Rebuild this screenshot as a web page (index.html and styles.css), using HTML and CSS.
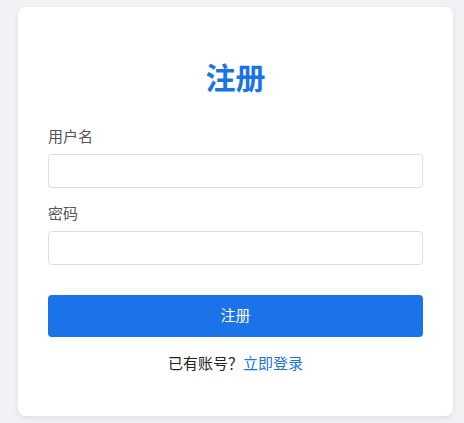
FILE: index.html
```html
<!DOCTYPE html>
<html lang="zh-CN">
<head>
    <meta charset="UTF-8">
    <meta name="viewport" content="width=device-width, initial-scale=1.0">
    <title>注册</title>
    <link rel="stylesheet" href="styles.css">
</head>
<body>
    <div class="register-box">
        <h1>注册</h1>
        <form action="/register" method="post">
            <div class="field">
                <label for="username">用户名</label>
                <input type="text" id="username" name="username">
            </div>
            <div class="field">
                <label for="password">密码</label>
                <input type="password" id="password" name="password">
            </div>
            <button type="submit">注册</button>
        </form>
        <p class="login-link">已有账号？<a href="/login">立即登录</a></p>
    </div>
</body>
</html>
```

FILE: styles.css
```css
body {
    font-family: "Noto Sans CJK SC", "Noto Sans", sans-serif;
    margin: 0;
    padding: 7px 11px 7px 18px;
    background-color: #f0f2f5;
}

.register-box {
    background-color: #fff;
    border-radius: 8px;
    box-shadow: 0 2px 6px rgba(0, 0, 0, 0.08);
    padding: 30px 30px 43px 30px;
}

h1 {
    color: #1a73e8;
    font-size: 30px;
    line-height: 40px;
    text-align: center;
    margin: 19px 0 30px 0;
}

.field {
    margin-bottom: 15px;
}

label {
    display: block;
    color: #555;
    font-size: 15px;
    line-height: 20px;
    margin-bottom: 8px;
}

input {
    display: block;
    box-sizing: border-box;
    width: 100%;
    height: 34px;
    border: 1px solid #ddd;
    border-radius: 4px;
    padding: 0 10px;
    font-size: 15px;
    outline: none;
}

button {
    display: block;
    width: 100%;
    height: 42px;
    margin-top: 30px;
    padding: 0 0 3px 0;
    background-color: #1a73e8;
    color: #fff;
    border: none;
    border-radius: 4px;
    font-family: inherit;
    font-size: 15px;
    cursor: pointer;
}

.login-link {
    text-align: center;
    font-size: 15px;
    line-height: 20px;
    color: #222;
    margin: 16px 0 0 0;
}

.login-link a {
    color: #1a73e8;
    text-decoration: none;
}
```
